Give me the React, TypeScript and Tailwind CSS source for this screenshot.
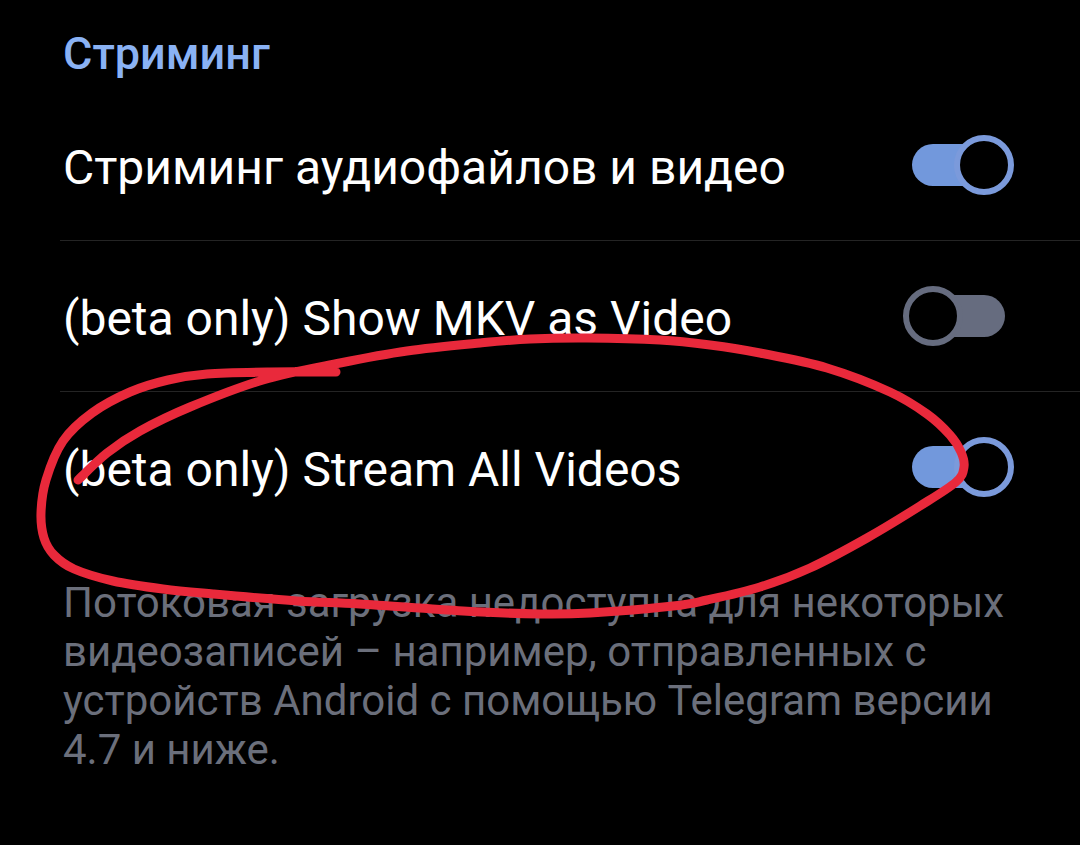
import { useState } from "react";

type Point = [number, number];

// Pen stroke, from the upper left tail round the last setting and back.
const STROKE: Point[] = [
  [336, 372], [270, 372], [207, 374], [168, 380], [130, 392], [92, 413], [63, 441],
  [46, 480], [41, 513], [44, 538], [54, 555], [74, 569], [113, 581], [163, 589],
  [213, 594], [297, 601], [360, 604], [463, 611], [540, 614], [590, 613], [673, 606],
  [707, 600], [760, 587], [810, 568], [867, 538], [920, 506], [956, 482], [964, 467],
  [961, 452], [950, 435], [927, 414], [890, 392], [827, 368], [760, 353], [710, 345],
  [660, 340], [587, 338], [530, 339], [480, 343], [407, 351], [340, 363], [263, 380],
  [190, 407], [140, 431], [107, 453], [78, 480]
];

// Catmull-Rom through the points, written as cubic beziers.
function smooth(pts: Point[]) {
  let d = `M${pts[0][0]} ${pts[0][1]}`;
  for (let i = 0; i < pts.length - 1; i++) {
    const a = pts[i - 1] ?? pts[i];
    const b = pts[i];
    const c = pts[i + 1];
    const e = pts[i + 2] ?? c;
    d += `C${b[0] + (c[0] - a[0]) / 6} ${b[1] + (c[1] - a[1]) / 6} `;
    d += `${c[0] - (e[0] - b[0]) / 6} ${c[1] - (e[1] - b[1]) / 6} ${c[0]} ${c[1]}`;
  }
  return d;
}

const SETTINGS = [
  { id: "stream-media", label: "Стриминг аудиофайлов и видео", on: true },
  { id: "show-mkv", label: "(beta only) Show MKV as Video", on: false },
  { id: "stream-all", label: "(beta only) Stream All Videos", on: true }
];

function SettingRow({ id, label, on }: { id: string; label: string; on: boolean }) {
  const [checked, setChecked] = useState(on);

  return (
    <li className="ml-[60px] h-[151px] flex items-center justify-between pl-[3px] pr-[75px] border-b border-[#242424] last:border-transparent">
      <label htmlFor={id} className="pt-[5px] text-[48px] leading-[56px] text-white">
        {label}
      </label>
      <input
        id={id}
        type="checkbox"
        role="switch"
        checked={checked}
        onChange={(e) => setChecked(e.target.checked)}
        className="appearance-none relative shrink-0 w-[93px] h-[42px] rounded-full cursor-pointer bg-[#666c7f] checked:bg-[#7298dc] after:absolute after:-top-[9px] after:-left-[9px] after:size-[60px] after:rounded-full after:border-[6px] after:border-[#666c7f] after:bg-black checked:after:left-auto checked:after:-right-[9px] checked:after:border-[#7b9adb]"
      />
    </li>
  );
}

export default function App() {
  return (
    <main className="relative min-h-screen bg-black font-['Roboto',sans-serif]">
      <h2 className="h-[90px] pt-7 pl-[63px] text-[45px] leading-[52px] font-medium text-[#8ab2f4]">
        Стриминг
      </h2>
      <ul>
        {SETTINGS.map((s) => (
          <SettingRow key={s.id} {...s} />
        ))}
      </ul>
      <p className="pt-[35px] pl-[63px] pr-[60px] pb-16 text-[42px] leading-[49px] text-[#6b6f7b]">
        Потоковая загрузка недоступна для некоторых видеозаписей – например, отправленных с
        устройств Android с помощью Telegram версии 4.7 и ниже.
      </p>
      <svg
        className="absolute top-0 left-0 w-full pointer-events-none"
        viewBox="0 0 1080 845"
        fill="none"
        aria-hidden="true"
      >
        <path
          d={smooth(STROKE)}
          stroke="#e9293b"
          strokeWidth="9"
          strokeLinecap="round"
          strokeLinejoin="round"
        />
      </svg>
    </main>
  );
}
